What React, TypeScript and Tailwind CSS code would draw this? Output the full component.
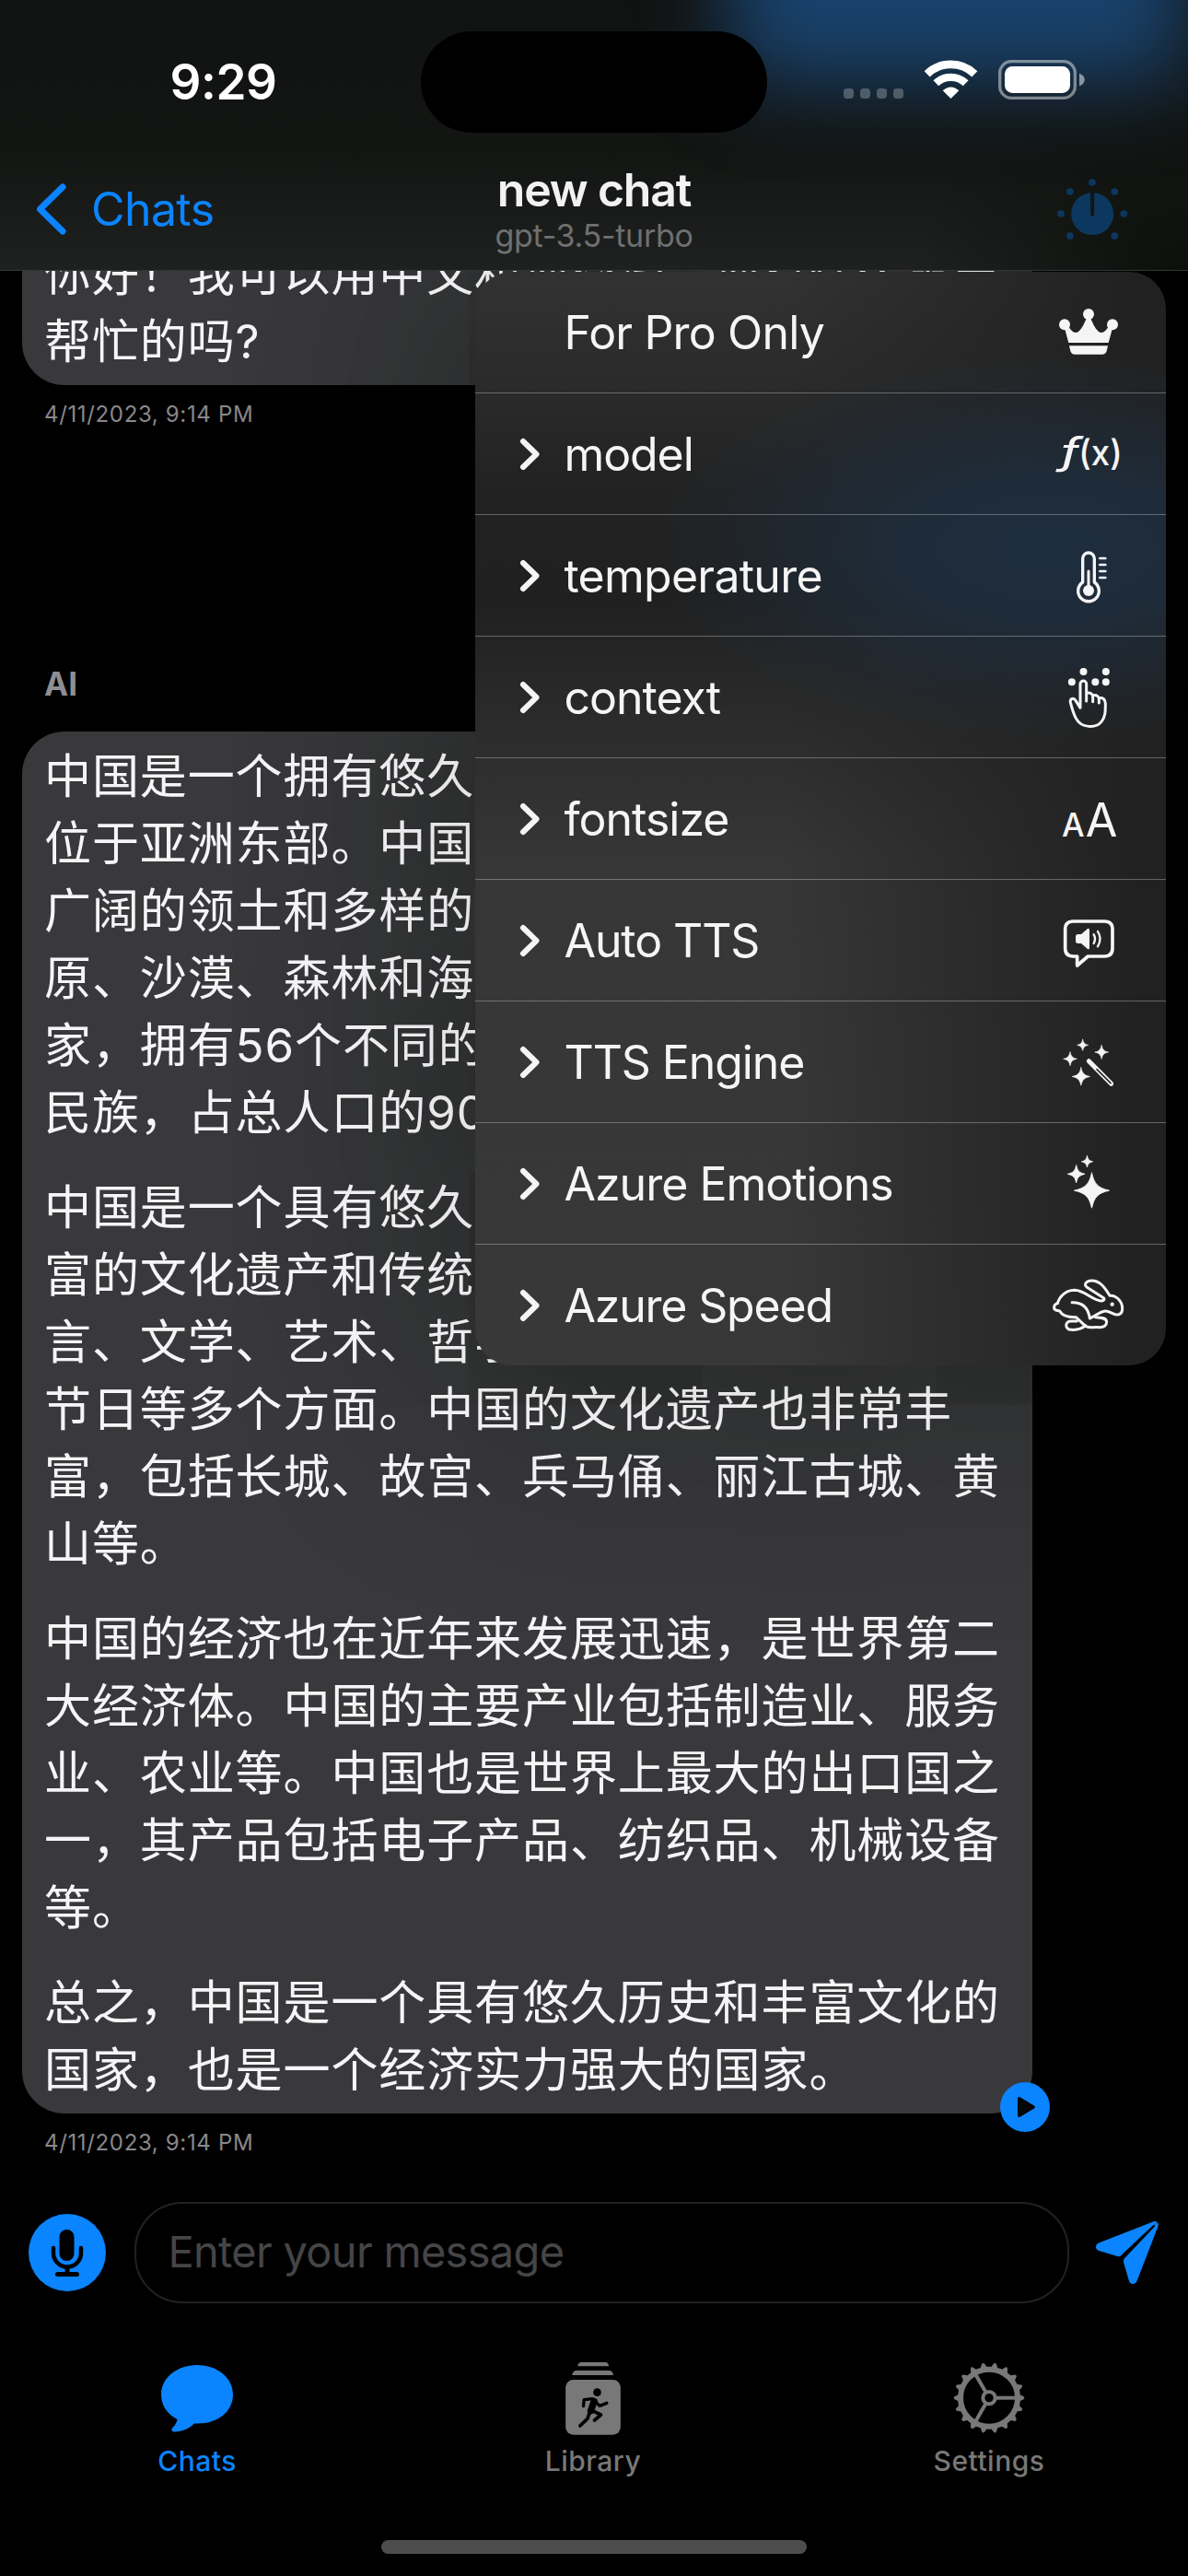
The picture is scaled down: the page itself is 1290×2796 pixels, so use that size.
import type { ReactNode } from 'react';

const firstMessage = ['你好！我可以用中文和您交流。您有什么需要', '帮忙的吗?'];

const paragraphs = [
  [
    '中国是一个拥有悠久历史和丰富文化的国家，',
    '位于亚洲东部。中国是世界上人口最多的国家',
    '广阔的领土和多样的地理环境，包括山脉、高',
    '原、沙漠、森林和海洋。中国是一个多民族国',
    '家，拥有56个不同的民族，其中汉族是最大的',
    '民族，占总人口的90%以上。',
  ],
  [
    '中国是一个具有悠久历史的文明古国，拥有丰',
    '富的文化遗产和传统，中国文化包括了语',
    '言、文学、艺术、哲学、宗教、饮食和',
    '节日等多个方面。中国的文化遗产也非常丰',
    '富，包括长城、故宫、兵马俑、丽江古城、黄',
    '山等。',
  ],
  [
    '中国的经济也在近年来发展迅速，是世界第二',
    '大经济体。中国的主要产业包括制造业、服务',
    '业、农业等。中国也是世界上最大的出口国之',
    '一，其产品包括电子产品、纺织品、机械设备',
    '等。',
  ],
  ['总之，中国是一个具有悠久历史和丰富文化的', '国家，也是一个经济实力强大的国家。'],
];

const star = (x: number, y: number, r: number) => {
  const a = r * 0.14;
  const b = r * 0.36;
  return `M${x} ${y - r}C${x + a} ${y - b} ${x + b} ${y - a} ${x + r} ${y}C${x + b} ${y + a} ${x + a} ${y + b} ${x} ${y + r}C${x - a} ${y + b} ${x - b} ${y + a} ${x - r} ${y}C${x - b} ${y - a} ${x - a} ${y - b} ${x} ${y - r}Z`;
};

const MenuIcon = ({ cy, children }: { cy: number; children: ReactNode }) => (
  <svg
    className="h-20 w-[100px] shrink-0"
    viewBox={`96 ${cy - 120} 300 240`}
    fill="none"
    stroke="#f5f5f5"
    strokeWidth="9"
    strokeLinecap="round"
    strokeLinejoin="round"
  >
    {children}
  </svg>
);

const CrownIcon = () => (
  <MenuIcon cy={0}>
    <g fill="#f5f5f5" stroke="none">
      <circle cx="246" cy="-60" r="18" />
      <circle cx="168" cy="-26" r="18" />
      <circle cx="324" cy="-26" r="18" />
      <path d="M181 33L167 -18L180 -20C192 -2 202 6 214 -4C226 -14 232 -30 240 -48H252C260 -30 266 -14 278 -4C290 6 300 -2 312 -20L325 -18L311 33Z" />
      <path d="M183 43H309L305 60Q302 71 290 71H202Q190 71 187 60Z" />
    </g>
  </MenuIcon>
);

const FunctionIcon = () => (
  <MenuIcon cy={0}>
    <g fill="#f5f5f5" stroke="none" className="font-['Inter',sans-serif]">
      <text x="150" y="32" fontSize="122" textLength="70" lengthAdjust="spacingAndGlyphs" className="italic">
        ƒ
      </text>
      <text x="214" y="36" fontSize="114" textLength="142" lengthAdjust="spacingAndGlyphs" className="font-medium">
        (x)
      </text>
    </g>
  </MenuIcon>
);

const ThermometerIcon = () => (
  <MenuIcon cy={133}>
    <path d="M227 154V77A19 19 0 0 1 265 77V154A34 34 0 1 1 227 154Z" strokeWidth="10" />
    <circle cx="246" cy="181" r="18" fill="#f5f5f5" stroke="none" />
    <path d="M246 118V180" />
    <path d="M283 76H301M283 97H301M283 118H301M283 139H301" strokeWidth="8" />
  </MenuIcon>
);

const HandIcon = () => (
  <MenuIcon cy={529}>
    <g fill="#f5f5f5" stroke="none">
      <circle cx="229.500" cy="445" r="12" />
      <circle cx="302.500" cy="445" r="12" />
      <circle cx="191.500" cy="479" r="12" />
      <circle cx="268" cy="479" r="12" />
      <circle cx="302.500" cy="479" r="12" />
    </g>
    <path d="M239 541V485A10 10 0 0 0 219 485V563L204 539C198 529 185 532 187 545C191 561 196 580 205 597C222 630 270 630 288 608C301 592 301 574 301 550C301 538 295 530 281 530M241 514C254 513 260 518 260 527V543M262 522C274 521 280 526 280 535V547" />
  </MenuIcon>
);

const FontSizeIcon = () => (
  <MenuIcon cy={925}>
    <g fill="#f5f5f5" stroke="none" className="font-['Inter',sans-serif]">
      <text x="159" y="983" fontSize="107" textLength="74" lengthAdjust="spacingAndGlyphs" className="font-medium">
        A
      </text>
      <text x="236" y="983" fontSize="150" textLength="104" lengthAdjust="spacingAndGlyphs">
        A
      </text>
    </g>
  </MenuIcon>
);

const SpeechIcon = () => (
  <MenuIcon cy={1321}>
    <path
      d="M196 1258H298Q324 1258 324 1284V1346Q324 1372 298 1372H244L209 1402V1372H196Q170 1372 170 1346V1284Q170 1258 196 1258Z"
      strokeWidth="11"
    />
    <path
      d="M212 1300H222L243 1282Q249 1279 249 1286V1344Q249 1351 243 1348L222 1330H212Q204 1330 204 1322V1308Q204 1300 212 1300Z"
      fill="#f5f5f5"
      stroke="none"
    />
    <path d="M263 1301Q271 1315 263 1330M276 1291Q291 1315 276 1340" strokeWidth="7" />
  </MenuIcon>
);

const WandIcon = () => (
  <MenuIcon cy={157}>
    <path
      d={star(227, 101, 18) + star(288.5, 124, 22) + star(186, 146, 22) + star(221.5, 203.500, 29)}
      fill="#f5f5f5"
      strokeWidth="2"
    />
    <path d="M247 153L320 227" strokeWidth="15" />
    <path d="M273 180L318 225" stroke="#272727" strokeWidth="5" />
  </MenuIcon>
);

const SparklesIcon = () => (
  <MenuIcon cy={553}>
    <path
      d={star(256.500, 574.5, 57) + star(206, 521, 28) + star(241.500, 480.5, 18)}
      fill="#f5f5f5"
      strokeWidth="3"
    />
  </MenuIcon>
);

const HareIcon = () => (
  <MenuIcon cy={949}>
    <path d="M145 942C152 918 172 900 200 899C230 899 258 930 285 934C293 935 299 930 296 925L241 890C228 880 240 868 256 868C284 868 300 892 315 917C338 915 357 938 356 960C356 976 345 981 333 978C322 976 312 966 300 967C282 969 268 984 250 991C246 962 230 938 192 939" />
    <path d="M145 942C131 946 130 962 142 965L152 967C160 982 180 988 205 987L236 1016C250 1024 262 1018 280 1020C296 1021 305 1014 305 1002C304 990 290 988 268 987" />
    <path d="M208 1000H188C168 1000 168 1028 190 1028C210 1029 226 1024 236 1014" />
    <circle cx="323" cy="945" r="6.500" fill="#f5f5f5" stroke="none" />
  </MenuIcon>
);

const menuItems = [
  { label: 'For Pro Only', icon: <CrownIcon />, expandable: false, tracking: 'tracking-[-0.85px]' },
  { label: 'model', icon: <FunctionIcon />, expandable: true, tracking: 'tracking-[-1.1px]' },
  { label: 'temperature', icon: <ThermometerIcon />, expandable: true, tracking: 'tracking-[-0.75px]' },
  { label: 'context', icon: <HandIcon />, expandable: true, tracking: 'tracking-[-1px]' },
  { label: 'fontsize', icon: <FontSizeIcon />, expandable: true, tracking: 'tracking-[-1px]' },
  { label: 'Auto TTS', icon: <SpeechIcon />, expandable: true, tracking: 'tracking-[-1.1px]' },
  { label: 'TTS Engine', icon: <WandIcon />, expandable: true, tracking: 'tracking-[-1.1px]' },
  { label: 'Azure Emotions', icon: <SparklesIcon />, expandable: true, tracking: 'tracking-[-1px]' },
  { label: 'Azure Speed', icon: <HareIcon />, expandable: true, tracking: 'tracking-[-1.2px]' },
];

const OptionsMenu = () => (
  <>
    {/* dims the bubbles but stays below their text */}
    <div className="absolute top-[295px] left-[516px] z-[1] h-[1187px] w-[750px] rounded-[40px] shadow-[0_0_400px_20px_rgba(0,14,4,0.42)]" />
    <div className="absolute top-[295px] left-[516px] z-10 w-[750px] rounded-[40px] bg-[#212121] bg-[radial-gradient(ellipse_430px_210px_at_620px_300px,#1e2e3f_0%,#1e2e3fd0_35%,#1e2e3f60_70%,transparent_100%),linear-gradient(to_right,transparent_45%,#212121_96%),linear-gradient(to_bottom,#323232_0%,#2b2b2b_10%,#222222_20%,#202020_30%,#2c2c2c_42%,#363636_54%,#383838_100%)] shadow-[0_0_360px_rgba(0,12,4,0.2)]">
      {menuItems.map((item) => (
        <div
          key={item.label}
          className="flex h-[132px] items-center border-b border-white/30 pr-[34px] pl-12 last:h-[131px] last:border-b-0"
        >
          <div className="w-[48.5px] shrink-0">
            {item.expandable && (
              <svg className="h-9 w-6" viewBox="0 0 24 36" fill="none">
                <path
                  d="M4 4L18.500 18L4 32"
                  stroke="#f5f5f5"
                  strokeWidth="6"
                  strokeLinecap="round"
                  strokeLinejoin="round"
                />
              </svg>
            )}
          </div>
          <span className={`flex-1 text-[50px] leading-none text-[#f5f5f5] ${item.tracking}`}>
            {item.label}
          </span>
          {item.icon}
        </div>
      ))}
    </div>
  </>
);

const StatusIcons = () => (
  <svg className="h-[43px] w-[262px]" viewBox="48 75 786 129" fill="none">
    <g fill="#fff" fillOpacity="0.25">
      <rect x="48" y="168" width="33" height="33" rx="11" />
      <rect x="102" y="168" width="33" height="33" rx="11" />
      <rect x="156" y="168" width="33" height="33" rx="11" />
      <rect x="210" y="168" width="33" height="33" rx="11" />
    </g>
    <path d="M320 121A112 112 0 0 1 475 121" stroke="#fff" strokeWidth="26" />
    <path d="M349 151A70 70 0 0 1 446 151" stroke="#fff" strokeWidth="25" />
    <path d="M397.500 201L371 175Q397.500 152 424 175Z" fill="#fff" />
    <rect x="557" y="80" width="245" height="119" rx="38" stroke="#fff" strokeOpacity="0.45" strokeWidth="10" />
    <rect x="573" y="96" width="213" height="87" rx="25" fill="#fff" />
    <path d="M816 119C839 126 839 153 816 160Z" fill="#fff" fillOpacity="0.5" />
  </svg>
);

const DialIcon = () => (
  <svg className="h-[76px] w-[76px]" viewBox="743 463 228 228" fill="#0c3860">
    <path d="M851.500 508.500A69 69 0 1 0 863.500 508.500V579Q863.500 585 857.500 585Q851.500 585 851.500 579Z" />
    <circle cx="857" cy="475" r="11.500" />
    <circle cx="785" cy="505" r="11.500" />
    <circle cx="930" cy="505" r="11.500" />
    <circle cx="755" cy="577" r="11.500" />
    <circle cx="960" cy="577" r="11.500" />
    <circle cx="785" cy="649" r="11.500" />
    <circle cx="930" cy="649" r="11.500" />
  </svg>
);

const Header = () => (
  <header className="relative z-20 h-[294px] shrink-0 overflow-hidden border-b border-[#333534] bg-[#131413] bg-[radial-gradient(ellipse_300px_200px_at_1290px_294px,#0b100b_0%,transparent_100%),linear-gradient(to_bottom,#111312_0%,#131513_55%,#1f2120_100%)]">
    {/* glow of the blurred blue bubble behind the bar */}
    <div className="absolute -top-[110px] left-[790px] h-[200px] w-[500px] rounded-[40px] bg-[#19426c] blur-[45px]" />
    <div className="relative grid h-[178px] grid-cols-[457px_376px_457px]">
      <div className="flex items-center justify-center pl-7 text-[53px] leading-none font-semibold tracking-[-0.4px] text-white">
        9:29
      </div>
      <div className="mt-[34px] h-[110px] rounded-full bg-black" />
      <div className="pt-[65px] pl-[83px]">
        <StatusIcons />
      </div>
    </div>
    <div className="relative grid h-[115px] grid-cols-3">
      <div className="flex items-center gap-[25px] pb-[17px] pl-[38px] text-[50px] leading-none text-[#0a84ff]">
        <svg className="h-[58px] w-9" viewBox="0 0 36 58" fill="none">
          <path
            d="M30 5L5.500 29L30 53"
            stroke="#0a84ff"
            strokeWidth="7"
            strokeLinecap="round"
            strokeLinejoin="round"
          />
        </svg>
        <span className="tracking-[-0.6px]">Chats</span>
      </div>
      <div className="pt-[2px] text-center">
        <h1 className="text-[50px] leading-[52px] font-semibold tracking-[-1.2px] text-[#f2f2f2]">new chat</h1>
        <p className="text-[34px] leading-[47px] tracking-[-0.3px] text-[#6f7070]">gpt-3.5-turbo</p>
      </div>
      <div className="flex justify-end pt-4 pr-[66px]">
        <DialIcon />
      </div>
    </div>
  </header>
);

const Bubble = ({ children }: { children: ReactNode }) => (
  <div className="relative w-[1097px] rounded-[46px] bg-[#39393b] pt-3 pb-[11px] pl-6 text-[51px] leading-[73.1px] tracking-[0.9px] whitespace-nowrap text-[#f5f5f7]">
    <div className="relative z-[2]">{children}</div>
  </div>
);

const Timestamp = () => (
  <div className="mt-[14px] pl-6 text-[24px] leading-9 tracking-[0.65px] text-[#88888c]">4/11/2023, 9:14 PM</div>
);

const Messages = () => (
  <main className="flex h-[2050px] shrink-0 flex-col justify-end overflow-hidden pl-6">
    <Bubble>
      {firstMessage.map((line) => (
        <p key={line}>{line}</p>
      ))}
    </Bubble>
    <Timestamp />
    <div className="mt-[254px] mb-8 pl-6 text-[35px] leading-10 font-bold text-[#8e8e93]">AI</div>
    <div className="relative w-[1096px]">
      <Bubble>
        <div className="flex flex-col gap-[29.5px]">
          {paragraphs.map((lines) => (
            <div key={lines[0]}>
              {lines.map((line) => (
                <p key={line}>{line}</p>
              ))}
            </div>
          ))}
        </div>
      </Bubble>
      <svg className="absolute -right-5 -bottom-5 h-[54px] w-[54px]" viewBox="0 0 54 54">
        <circle cx="27" cy="27" r="27" fill="#0a84ff" />
        <path d="M19 18Q19 15 22 16.500L37 25.500Q39 27 37 28.500L22 37.500Q19 39 19 36Z" fill="#050607" />
      </svg>
    </div>
    <Timestamp />
  </main>
);

const Composer = () => (
  <div className="mt-[46px] flex h-[110px] shrink-0 items-center pl-[31px]">
    <svg className="h-[84px] w-[84px]" viewBox="0 0 84 84" fill="none">
      <circle cx="42" cy="42" r="42" fill="#0a84ff" />
      <rect x="33.500" y="17" width="16" height="34" rx="8" fill="#000" />
      <path d="M27 37V42.500A15 15 0 0 0 57 42.500V37" stroke="#000" strokeWidth="4.500" strokeLinecap="round" />
      <path d="M42 58V65M31.500 65.500H52.500" stroke="#000" strokeWidth="5" strokeLinecap="round" />
    </svg>
    <div className="ml-[31px] flex h-[110px] w-[1015px] items-center rounded-[52px] border-2 border-[#222223] pb-[3px] pl-[34.5px] text-[47px] leading-none tracking-[-0.7px] text-[#454547]">
      Enter your message
    </div>
    <svg className="ml-[29px] h-[68px] w-[68px]" viewBox="540 93 204 204" fill="#0a84ff">
      <path d="M551 163L728 94Q735 92 740 96L732 104Q728 104 724 108L622 204Q617 209 610 207L550 189Q540 185 540 176Q540 167 551 163Z" />
      <path d="M741 97Q745 102 742 110L675 284Q670 297 660 297Q650 296 647 284L630 226Q629 219 633 214L730 112Q733 108 732 104Z" />
    </svg>
  </div>
);

const ChatsTabIcon = () => (
  <svg className="h-[84px] w-[84px]" viewBox="172 2560 84 84" fill="#0a84ff">
    <path d="M214 2567C236 2567 253 2581 253 2599C253 2617 237 2630.500 215 2630.500H211C205 2636 198 2639.500 190 2639.500C186 2639.500 185.500 2637 187.500 2635C190.500 2632 192 2629 192.500 2626C181 2620 175 2610 175 2599C175 2581 192 2567 214 2567Z" />
  </svg>
);

const LibraryTabIcon = () => (
  <svg className="h-[84px] w-[84px]" viewBox="65.500 45 252 252" fill="#787878">
    <path d="M141 70Q143 57 153 57H231Q241 57 243 70Z" />
    <path d="M123 99Q126 84 138 84H243Q255 84 258 99Z" />
    <rect x="102" y="114" width="179" height="179" rx="25" />
    <circle cx="205" cy="155" r="13" fill="#000" />
    <g fill="none" stroke="#000" strokeLinecap="round" strokeLinejoin="round">
      <path d="M160 200L162 179L190 176L213 199L236 190" strokeWidth="10" />
      <path d="M195 184L184 215" strokeWidth="22" />
      <path d="M188 214L217 228L196 246M182 216L173 241L149 264" strokeWidth="11" />
    </g>
  </svg>
);

const SettingsTabIcon = () => (
  <svg className="h-[84px] w-[84px]" viewBox="-126 -128 252 252" fill="none" stroke="#787878">
    <circle r="93" strokeWidth="18" />
    <circle r="20" strokeWidth="12" />
    {Array.from({ length: 18 }, (_, i) => (
      <path
        key={i}
        d="M98 -12L113 -4Q117 0 113 4L98 12Z"
        fill="#787878"
        stroke="none"
        transform={`rotate(${i * 20})`}
      />
    ))}
    {[0, 120, 240].map((angle) => (
      <path key={angle} d="M22 0H90" strokeWidth="12" transform={`rotate(${angle})`} />
    ))}
  </svg>
);

const tabs = [
  { label: 'Chats', icon: <ChatsTabIcon />, color: 'text-[#0a84ff]' },
  { label: 'Library', icon: <LibraryTabIcon />, color: 'text-[#787878]' },
  { label: 'Settings', icon: <SettingsTabIcon />, color: 'text-[#787878]' },
];

const TabBar = () => (
  <nav className="mr-px -ml-px grid shrink-0 grid-cols-3 pt-[60px]">
    {tabs.map((tab) => (
      <div key={tab.label} className={`flex flex-col items-center ${tab.color}`}>
        {tab.icon}
        <span className="mt-[7px] text-[30px] leading-10 font-medium tracking-[0.5px]">{tab.label}</span>
      </div>
    ))}
  </nav>
);

const App = () => (
  <div
    lang="zh-CN"
    className="relative flex h-[2796px] w-[1290px] flex-col overflow-hidden bg-black font-['Inter','Noto_Sans_CJK_SC',sans-serif]"
  >
    <Header />
    <Messages />
    <Composer />
    <TabBar />
    <div className="mt-[66px] h-[15px] w-[462px] shrink-0 self-center rounded-full bg-[#4d4d4d]" />
    <OptionsMenu />
  </div>
);

export default App;
